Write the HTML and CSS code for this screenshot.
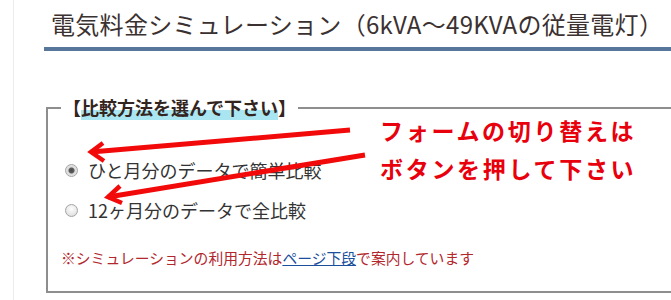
FILE: index.html
```html
<!DOCTYPE html>
<html lang="ja">
<head>
<meta charset="utf-8">
<title>電気料金シミュレーション</title>
<link rel="stylesheet" href="styles.css">
</head>
<body>
<div class="page">
  <h1 class="title">電気料金シミュレーション（6kVA～49KVAの従量電灯）</h1>
  <fieldset class="form-switch">
    <legend class="switch-legend">【<span class="marker">比較方法を選んで下さい</span>】</legend>
    <div class="options">
      <label class="option"><input type="radio" name="mode" class="radio" checked><span class="option-text">ひと月分のデータで簡単比較</span></label>
      <label class="option"><input type="radio" name="mode" class="radio"><span class="option-text">12ヶ月分のデータで全比較</span></label>
    </div>
    <p class="note">※シミュレーションの利用方法は<a href="#guide" class="note-link">ページ下段</a>で案内しています</p>
  </fieldset>
</div>
<p class="annotation">フォームの切り替えは<br>ボタンを押して下さい</p>
<svg class="arrows" width="671" height="300" viewBox="0 0 671 300" aria-hidden="true">
  <g stroke="#f20a0a" fill="none">
    <path d="M350 130 L91 152" stroke-width="5"/>
    <path d="M103 143 L91 152 L104 161" stroke-width="4.5" stroke-linejoin="miter"/>
    <path d="M365 155 L108 197" stroke-width="5"/>
    <path d="M120 186 L108 197 L122 203" stroke-width="4.5" stroke-linejoin="miter"/>
  </g>
</svg>
</body>
</html>
```
FILE: styles.css
```css
html, body {
  margin: 0;
  padding: 0;
  background: #fff;
}
body {
  position: relative;
  width: 671px;
  height: 300px;
  overflow: hidden;
  font-family: "Noto Sans CJK JP", "Noto Sans", sans-serif;
  color: #333;
}
.page {
  margin-left: 13px;
  border-left: 1px solid #ececec;
  padding-left: 30px;
  height: 300px;
  overflow: hidden;
}
.title {
  margin: 6px 0 0;
  padding: 0 0 5px 7px;
  font-size: 24px;
  line-height: 36px;
  font-weight: 400;
  letter-spacing: 0.3px;
  color: #3b3131;
  border-bottom: 4px solid #56779a;
  white-space: nowrap;
}
.form-switch {
  margin: 43px -20px 0 2px;
  padding: 0 0 21px;
  border: 2px solid #999;
  border-color: #8e8e8e #8e8e8e #8e8e8e #8e8e8e;
}
.switch-legend {
  margin-left: 13px;
  padding: 0 2px;
  font-size: 18px;
  line-height: 27px;
  font-weight: 700;
  color: #33251d;
}
.marker {
  background: linear-gradient(transparent 62%, #a9e6f2 62%);
}
.options {
  margin-top: 29px;
  padding-left: 17px;
  display: flex;
  flex-direction: column;
}
.option {
  display: flex;
  align-items: center;
  height: 40px;
}
.radio {
  -webkit-appearance: none;
  appearance: none;
  margin: 0 10px 0 0;
  width: 13px;
  height: 13px;
  border-radius: 50%;
  border: 1px solid #a4a4a4;
  background: radial-gradient(circle at 50% 35%, #fdfdfd 0, #e4e4e4 70%, #d2d2d2 100%);
  box-sizing: border-box;
  position: relative;
}
.radio:checked {
  background: radial-gradient(circle, #4a4a4a 0, #5c5c5c 2.5px, #d9d9d9 3.5px, #f2f2f2 100%);
}
.option-text {
  font-size: 18px;
  line-height: 27px;
  color: #333;
}
.note {
  margin: 16px 0 0 13px;
  font-size: 14.8px;
  line-height: 24px;
  color: #b3262c;
}
.note-link {
  color: #1b4f9c;
  text-decoration: underline;
}
.annotation {
  position: absolute;
  left: 380px;
  top: 111px;
  margin: 0;
  font-size: 23px;
  line-height: 38px;
  font-weight: 700;
  letter-spacing: 2.7px;
  color: #e8000c;
  white-space: nowrap;
}
.arrows {
  position: absolute;
  left: 0;
  top: 0;
  pointer-events: none;
}
```
